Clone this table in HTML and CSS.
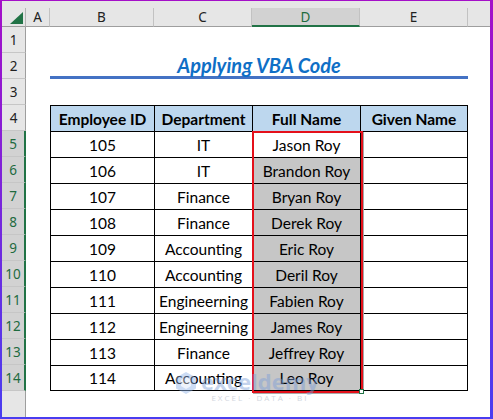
FILE: index.html
```html
<!DOCTYPE html>
<html>
<head>
<meta charset="utf-8">
<link rel="stylesheet" href="styles.css">
</head>
<body>
<div class="frame">
  <div class="strip"></div>
  <div class="sheet">
    <div class="corner"><svg width="13" height="12" viewBox="0 0 13 12"><polygon points="13,0 13,12 0,12" fill="#217346"/></svg></div>
    <div class="ch">A</div><div class="ch">B</div><div class="ch">C</div><div class="ch sel">D</div><div class="ch">E</div><div class="ch last"></div>

    <div class="rh">1</div><div class="blank span6"></div>
    <div class="rh">2</div><div class="blank"></div><div class="title">Applying VBA Code</div><div class="blank"></div>
    <div class="rh">3</div><div class="blank span6"></div>

    <div class="rh">4</div><div class="blank"></div><div class="t th first">Employee ID</div><div class="t th">Department</div><div class="t th">Full Name</div><div class="t th lastc">Given Name</div><div class="blank"></div>
    <div class="rh rs">5</div><div class="blank"></div><div class="t first">105</div><div class="t">IT</div><div class="t">Jason Roy</div><div class="t lastc"></div><div class="blank"></div>
    <div class="rh rs">6</div><div class="blank"></div><div class="t first">106</div><div class="t">IT</div><div class="t g">Brandon Roy</div><div class="t lastc"></div><div class="blank"></div>
    <div class="rh rs">7</div><div class="blank"></div><div class="t first">107</div><div class="t">Finance</div><div class="t g">Bryan Roy</div><div class="t lastc"></div><div class="blank"></div>
    <div class="rh rs">8</div><div class="blank"></div><div class="t first">108</div><div class="t">Finance</div><div class="t g">Derek Roy</div><div class="t lastc"></div><div class="blank"></div>
    <div class="rh rs">9</div><div class="blank"></div><div class="t first">109</div><div class="t">Accounting</div><div class="t g">Eric Roy</div><div class="t lastc"></div><div class="blank"></div>
    <div class="rh rs">10</div><div class="blank"></div><div class="t first">110</div><div class="t">Accounting</div><div class="t g">Deril Roy</div><div class="t lastc"></div><div class="blank"></div>
    <div class="rh rs">11</div><div class="blank"></div><div class="t first">111</div><div class="t">Engineerning</div><div class="t g">Fabien Roy</div><div class="t lastc"></div><div class="blank"></div>
    <div class="rh rs">12</div><div class="blank"></div><div class="t first">112</div><div class="t">Engineerning</div><div class="t g">James Roy</div><div class="t lastc"></div><div class="blank"></div>
    <div class="rh rs">13</div><div class="blank"></div><div class="t first">113</div><div class="t">Finance</div><div class="t g">Jeffrey Roy</div><div class="t lastc"></div><div class="blank"></div>
    <div class="rh rs">14</div><div class="blank"></div><div class="t first lastr">114</div><div class="t lastr">Accounting</div><div class="t g lastr">Leo Roy</div><div class="t lastc lastr"></div><div class="blank"></div>
    <div class="rh end"></div><div class="blank span6"></div>
  </div>

  <div class="selbox"><div class="handle"></div></div>

  <div class="watermark">
    <svg class="wm-logo" width="22" height="24" viewBox="0 0 22 24"><polygon points="11,1 21,6.5 21,17.5 11,23 1,17.5 1,6.5" fill="#8fb3e8"/><polygon points="11,6 16,9 16,15 11,18 6,15 6,9" fill="#dbe6f7"/></svg>
    <div class="wm-text">
      <div class="wm-name">exceldemy</div>
      <div class="wm-sub">EXCEL · DATA · BI</div>
    </div>
  </div>
</div>
</body>
</html>
```

FILE: styles.css
```css
* { box-sizing: border-box; }
html, body { margin: 0; padding: 0; background: #fff; }

.frame {
  position: relative;
  width: 493px;
  height: 419px;
  border-style: solid;
  border-width: 1px 3px 2px 2px;
  border-image: linear-gradient(#a50fc8, #4a3df0) 1;
  background: #fff;
  overflow: hidden;
}

.strip { height: 7px; background: #e6e6e6; }

.sheet {
  display: grid;
  grid-template-columns: 24px 24px 104px 98px 108px 108px 22px;
  grid-template-rows: 19px repeat(14, 26px) 26px;
  font-family: Lato, "Liberation Sans", sans-serif;
  font-size: 15.5px;
  color: #000;
}

.corner {
  background: #e6e6e6;
  border-right: 1px solid #b4b4b4;
  border-bottom: 1px solid #9e9e9e;
  display: flex;
  align-items: flex-end;
  justify-content: flex-end;
  padding: 0 2px 2px 0;
}

.ch {
  background: #e6e6e6;
  border-right: 1px solid #c2c2c2;
  border-bottom: 1px solid #9e9e9e;
  font-family: "Noto Sans", sans-serif;
  font-size: 13.5px;
  color: #222;
  display: flex;
  align-items: center;
  justify-content: center;
}
.ch.last { border-right: none; }
.ch.sel {
  background: #d2d2d2;
  border-bottom: 2px solid #217346;
  color: #1e6b3f;
}

.rh {
  background: #e6e6e6;
  border-right: 1px solid #9e9e9e;
  border-bottom: 1px solid #c6c6c6;
  font-family: "Noto Sans", sans-serif;
  font-size: 13.5px;
  color: #222;
  display: flex;
  align-items: center;
  justify-content: center;
}
.rh.rs {
  background: #d2d2d2;
  border-right: 2px solid #217346;
  color: #1e6b3f;
}
.rh.end { border-bottom: none; }

.blank { background: #fff; }
.span6 { grid-column: span 6; }

.title {
  grid-column: span 4;
  display: flex;
  align-items: center;
  justify-content: center;
  font-weight: 700;
  font-style: italic;
  font-size: 20px;
  color: #0f6fc6;
  border-bottom: 3px solid #4472c4;
  padding-top: 1px;
}

.t {
  border-left: 1px solid #000;
  border-top: 1px solid #000;
  display: flex;
  align-items: center;
  justify-content: center;
  white-space: nowrap;
}
.t.lastc { border-right: 1px solid #000; }
.t.lastr { border-bottom: 1px solid #000; }
.th { background: #bdd7ee; font-weight: 700; }
.g { background: #c6c6c6; }

.selbox {
  position: absolute;
  left: 250px;
  top: 130px;
  width: 111px;
  height: 262px;
  border: 2px solid #e4101a;
  box-shadow: 1px 1px 0 #a8a8a8;
}
.handle {
  position: absolute;
  right: -3px;
  bottom: -3px;
  width: 5px;
  height: 5px;
  background: #fff;
  border: 1px solid #217346;
}

.watermark {
  position: absolute;
  left: 173px;
  top: 368px;
  display: flex;
  align-items: flex-start;
  gap: 4px;
  opacity: 0.45;
}
.wm-logo { margin-top: 2px; }
.wm-text { display: flex; flex-direction: column; align-items: center; }
.wm-name {
  font-family: "Open Sans", sans-serif;
  font-weight: 700;
  font-size: 22px;
  line-height: 24px;
  color: #7b9ed8;
}
.wm-sub {
  font-family: "Open Sans", sans-serif;
  font-size: 8px;
  letter-spacing: 2px;
  color: #9aa6b8;
  line-height: 10px;
}
```
